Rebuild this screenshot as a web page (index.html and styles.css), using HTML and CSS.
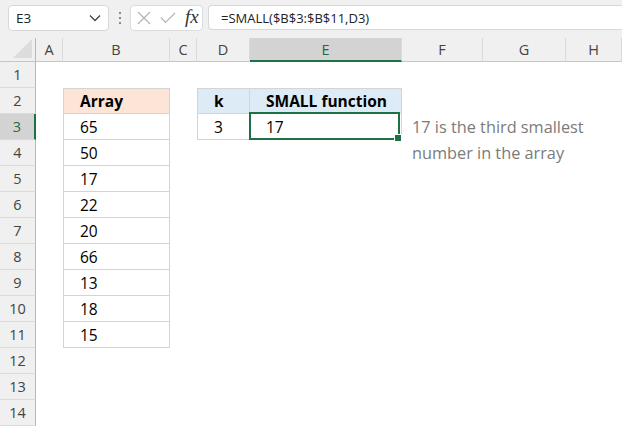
FILE: index.html
```html
<!DOCTYPE html>
<html>
<head>
<meta charset="utf-8">
<link rel="stylesheet" href="styles.css">
</head>
<body>
<div class="toolbar">
  <div class="namebox">
    <span>E3</span>
    <svg class="chev" width="12" height="8" viewBox="0 0 12 8"><path d="M1 1.5 L6 6.5 L11 1.5" fill="none" stroke="#444" stroke-width="1.3"/></svg>
  </div>
  <div class="dots"><i></i><i></i><i></i></div>
  <div class="btns">
    <svg width="14" height="14" viewBox="0 0 14 14"><path d="M1 1 L13 13 M13 1 L1 13" stroke="#b4b4b4" stroke-width="1.2" fill="none"/></svg>
    <svg width="16" height="12" viewBox="0 0 16 12"><path d="M1 5.5 L5.5 10.5 L15 1" stroke="#b4b4b4" stroke-width="1.2" fill="none"/></svg>
    <span class="fx">fx</span>
  </div>
  <div class="formula">=SMALL($B$3:$B$11,D3)</div>
</div>
<div class="sheet">
  <div class="ch corner"><span class="tri"></span></div>
  <div class="ch">A</div><div class="ch">B</div><div class="ch">C</div><div class="ch">D</div><div class="ch sel">E</div><div class="ch">F</div><div class="ch">G</div><div class="ch">H</div>

  <div class="rh">1</div><div></div><div></div><div></div><div></div><div></div><div></div><div></div><div></div>

  <div class="rh">2</div><div></div><div class="c t tl tt orange b">Array</div><div></div><div class="c t tl tt blue b kpad">k</div><div class="c t tt blue b">SMALL function</div><div></div><div></div><div></div>

  <div class="rh rsel">3</div><div></div><div class="c t tl">65</div><div></div><div class="c t tl kpad">3</div><div class="c t active">17</div><div class="c note">17 is the third smallest</div><div></div><div></div>

  <div class="rh">4</div><div></div><div class="c t tl">50</div><div></div><div></div><div></div><div class="c note">number in the array</div><div></div><div></div>

  <div class="rh">5</div><div></div><div class="c t tl">17</div><div></div><div></div><div></div><div></div><div></div><div></div>
  <div class="rh">6</div><div></div><div class="c t tl">22</div><div></div><div></div><div></div><div></div><div></div><div></div>
  <div class="rh">7</div><div></div><div class="c t tl">20</div><div></div><div></div><div></div><div></div><div></div><div></div>
  <div class="rh">8</div><div></div><div class="c t tl">66</div><div></div><div></div><div></div><div></div><div></div><div></div>
  <div class="rh">9</div><div></div><div class="c t tl">13</div><div></div><div></div><div></div><div></div><div></div><div></div>
  <div class="rh">10</div><div></div><div class="c t tl">18</div><div></div><div></div><div></div><div></div><div></div><div></div>
  <div class="rh">11</div><div></div><div class="c t tl">15</div><div></div><div></div><div></div><div></div><div></div><div></div>
  <div class="rh">12</div><div></div><div></div><div></div><div></div><div></div><div></div><div></div><div></div>
  <div class="rh">13</div><div></div><div></div><div></div><div></div><div></div><div></div><div></div><div></div>
  <div class="rh">14</div><div></div><div></div><div></div><div></div><div></div><div></div><div></div><div></div>
</div>
</body>
</html>
```
FILE: styles.css
```css
* { box-sizing: border-box; }
html, body { margin: 0; padding: 0; }
body {
  width: 622px;
  height: 426px;
  overflow: hidden;
  background: #fff;
  font-family: "Open Sans", "Noto Sans", sans-serif;
}
.toolbar {
  height: 38px;
  background: #f0f0f0;
  display: flex;
  align-items: flex-start;
  padding: 5px 0 0 8px;
}
.namebox {
  width: 101px;
  height: 26px;
  background: #fff;
  border: 1px solid #d8d8d8;
  border-radius: 4px;
  display: flex;
  align-items: center;
  justify-content: space-between;
  padding: 0 7px 0 7px;
  font-size: 13.5px;
  color: #222;
}
.dots {
  width: 21px;
  height: 26px;
  display: flex;
  flex-direction: column;
  align-items: center;
  justify-content: center;
  gap: 3px;
}
.dots i {
  display: block;
  width: 2px;
  height: 2px;
  background: #8a8a8a;
}
.btns {
  width: 73px;
  height: 26px;
  background: #fff;
  border: 1px solid #dcdcdc;
  border-radius: 4px;
  display: flex;
  align-items: center;
  padding-left: 6px;
  gap: 9px;
}
.fx {
  font-family: "Liberation Serif", "DejaVu Serif", serif;
  font-style: italic;
  font-size: 19px;
  color: #333;
  line-height: 1;
  margin-top: -3px;
}
.formula {
  flex: 1;
  margin-left: 5px;
  height: 25px;
  background: #fff;
  border: 1px solid #d8d8d8;
  border-right: none;
  border-radius: 4px 0 0 4px;
  display: flex;
  align-items: center;
  padding-left: 12px;
  font-size: 13px;
  color: #222;
}
.sheet {
  display: grid;
  grid-template-columns: 36px 27px 107px 27px 53px 152px 81px 83px 1fr;
  grid-template-rows: 24px repeat(14, 26px);
}
.ch {
  background: #f0f0f0;
  border-right: 1px solid #dadada;
  border-bottom: 1px solid #c6c6c6;
  display: flex;
  align-items: center;
  justify-content: center;
  font-size: 14.5px;
  color: #444;
}
.ch.corner {
  border-right: 1px solid #b8b8b8;
  position: relative;
}
.tri {
  position: absolute;
  right: 3px;
  bottom: 3px;
  width: 0;
  height: 0;
  border-left: 19px solid transparent;
  border-bottom: 19px solid #dcdcdc;
}
.ch.sel {
  background: #d3d3d3;
  border-bottom: 2px solid #1e7145;
  color: #1e6b40;
}
.rh {
  background: #f0f0f0;
  border-right: 1px solid #b8b8b8;
  border-bottom: 1px solid #dadada;
  display: flex;
  align-items: center;
  justify-content: center;
  font-size: 14.5px;
  color: #444;
}
.rh.rsel {
  background: #d3d3d3;
  border-right: 2px solid #1e7145;
  color: #1e6b40;
}
.c {
  display: flex;
  align-items: center;
  padding-left: 16px;
  font-size: 15.5px;
  color: #000;
  white-space: nowrap;
}
.t {
  border-right: 1px solid #d4d4d4;
  border-bottom: 1px solid #d4d4d4;
}
.tl { border-left: 1px solid #d4d4d4; }
.tt { border-top: 1px solid #d4d4d4; }
.orange { background: #fce4d6; }
.blue { background: #ddebf7; }
.b { font-weight: 700; }
.kpad { padding-left: 16px; }
.active {
  position: relative;
}
.active::after {
  content: "";
  position: absolute;
  top: -2px;
  left: -1px;
  right: 1px;
  bottom: -1px;
  border: 2px solid #1e7145;
}
.active::before {
  content: "";
  position: absolute;
  right: -1px;
  bottom: -3px;
  width: 6px;
  height: 6px;
  background: #1e7145;
  border: 1px solid #fff;
  z-index: 2;
}
.note {
  padding-left: 10px;
  font-size: 16.3px;
  color: #7b7b7b;
  overflow: visible;
}
```
